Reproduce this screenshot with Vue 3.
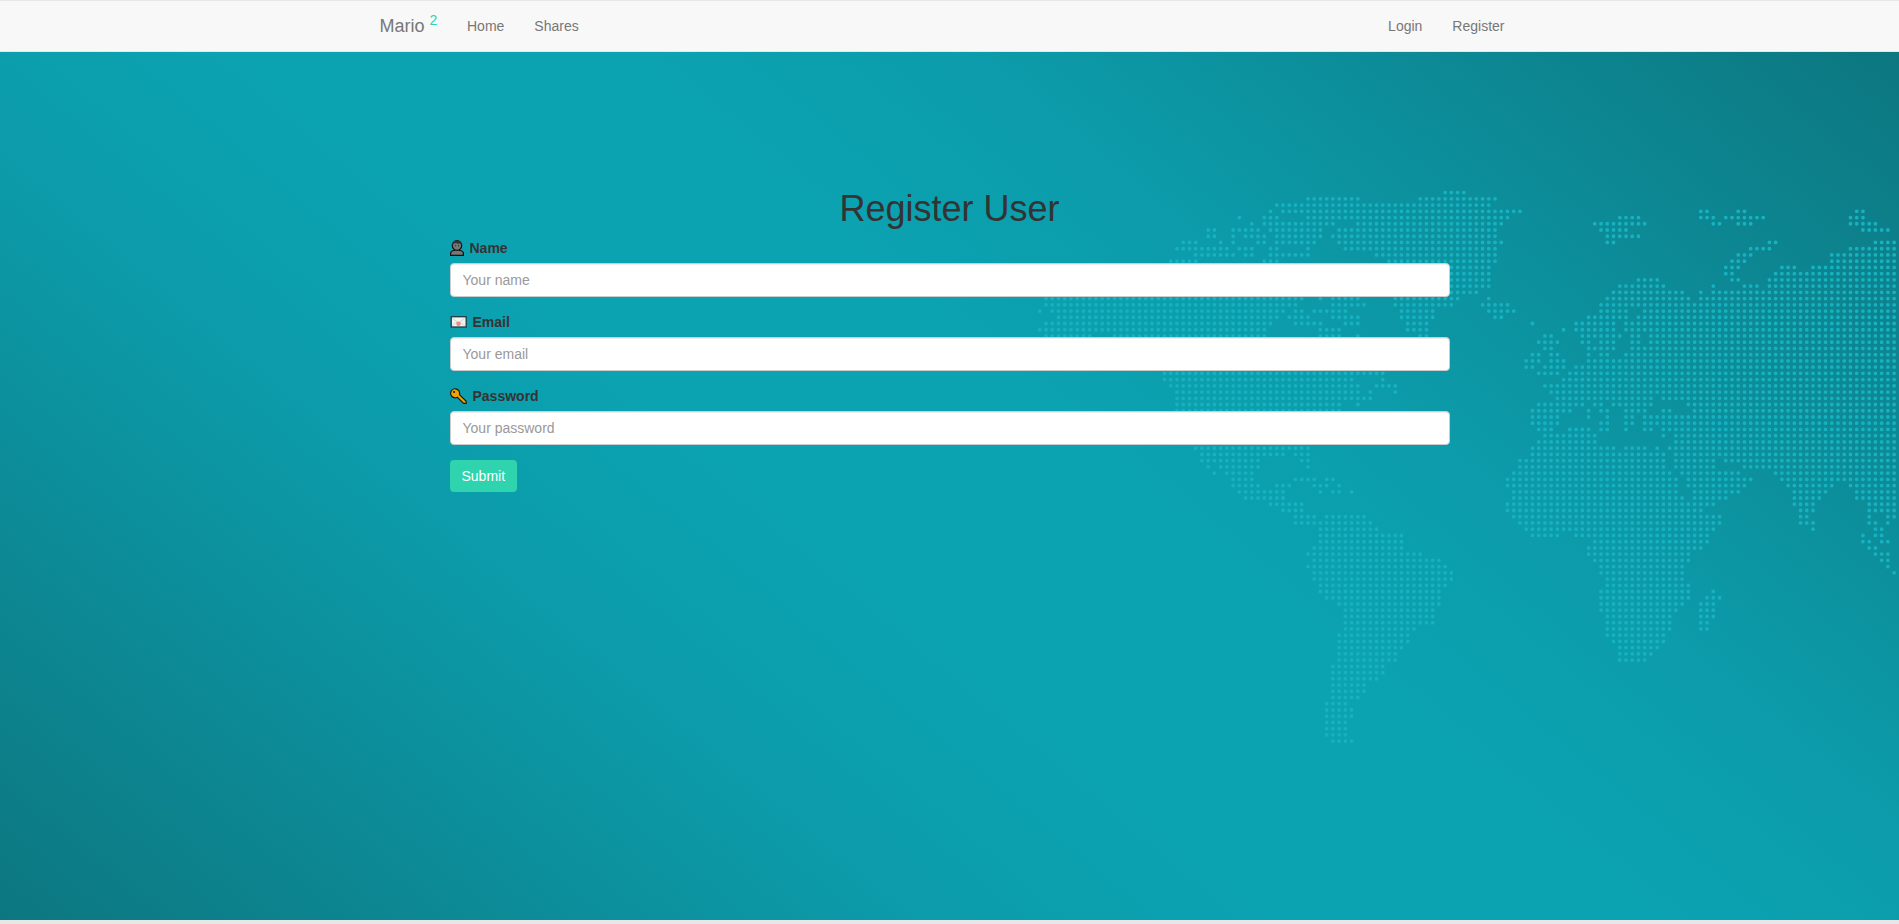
<script setup>
import { reactive } from 'vue'

const form = reactive({ name: '', email: '', password: '' })

const pitch = 6.236
const originX = 1039.8
const originY = 140.6

// One line per latitude; each range lists the first and last dotted column.
const landRows = `65-68
43-51 61-73
38-72
37 39-77 106-107 112-113 131-132
32 36-38 43-75 93-96 106-108 110-116 130-132
34 36-47 51-74 89-97 108-109 112-114 130-134
27-28 31-35 37-45 48-73 90-94 132-136
27-28 31 33-36 38-45 47-73 91-96
23-25 29 31 35-36 38-44 48-74 91-92 117-118 134-137
22-30 32-34 37-38 43 49-73 114-117 130-137
25-31 33-34 37-43 54-73 112-114 127-137
21-25 36-38 56-73 111-113 127-137
60-72 110-112 119-121 124-137
60-72 110-111 118-137
60-72 96-99 111-112 117-137
60-72 93-100 108 113-115 117-137
60-70 92-103 106 108-137
1-42 45 47-51 57-67 72 91-104 106-137
1-41 47-52 57-66 71-75 90-137
0 2-39 41-42 44-49 58-63 72-76 90-94 97-137
3-38 40-43 47-51 58-63 73-74 88-94 96-137
1-37 41-45 49-51 59-62 79 86-92 94-137
0-36 45-48 59-62 84 86-92 94-137
1-8 12-36 45-48 51 61-62 81-82 87-93 95-96 98-137
80-83 87-88 90-92 95-96 98-137
81-82 88-92 95-137
79-80 82-83 88 90-91 94-137
78-80 82-84 88-137
78-79 81-84 86-137
20-55 80-83 85-137
20-50 55 84-137
21-51 54-57 81-137
22-51 53 57 82-137
22-53 83-98 100-137
22-48 51 80-87 89-90 92-98 104-137
22-48 79-85 88 90-91 94-97 100-101 105-137
79-83 88 91 94-95 97-137
79-83 90-91 94-95 97-137
80-82 85-88 90-91 94 97-98 100-137
81-89 100 102-137
80-89 102-137
25-43 79-92 94-97 99 101-137
26-39 41-43 79-100 102-137
26-35 42-43 77-100 102-108 110-137
27 29-35 43 77-100 102-108 113-137
28 30-34 76-101 103-112 118-137
31-34 41-44 46-47 75-102 104-114 119-137
31-35 38-40 44-46 48 75-102 104-113 120-127 130-137
32-39 45 47-48 50 76-102 105-112 121-126 131-137
33-39 76-103 105-110 121-125 131-137
37-42 75-108 121-124 133-137
39-42 75-106 122-124 133-137
41-44 46-52 76-109 122-123 133 136-137
41-53 77-109 122-124 133-134 136
45-54 78-108 124 134-135
45-58 79-83 86-107 132 134-135
45-58 89-107 132-133 135-136
44-58 88-106 133-134
43-61 88-104 134-136
44-64 89-104 135-136
43-65 90-103 136
44-66 90-103 137
44-66 91-103
45-65 91-104
45-64 90-104 108
46-64 90-104 107-109
48-64 90-103 106-108
49-63 90-102 106-108
49-63 91-101 106-108
49-63 91-101 106-107
49-60 91-101 106-107
48-59 91-100
48-59 92-100
48-58 93-99
48-57 93-98
48-57 93-97
47-55
47-55
47-54
47-52
47-52
47-51
46-49
46-50
46-50
46-49
46-49
46-49
47-50`.split('\n')

const dotsPath = landRows
  .map((row, r) =>
    row
      .split(' ')
      .map((range) => {
        const [from, to = from] = range.split('-').map(Number)
        let d = ''
        for (let c = from; c <= to; c++) {
          d += `M${(originX + c * pitch).toFixed(2)} ${(originY + r * 6.233).toFixed(2)}h0`
        }
        return d
      })
      .join('')
  )
  .join('')
</script>

<template>
  <div class="page">
    <nav class="navbar">
      <div class="container">
        <a class="brand">Mario <sup>2</sup></a>
        <a class="link">Home</a>
        <a class="link">Shares</a>
        <span class="spacer"></span>
        <a class="link">Login</a>
        <a class="link">Register</a>
      </div>
    </nav>

    <main class="hero">
      <svg class="map" width="1899" height="868" viewBox="0 0 1899 868" aria-hidden="true">
        <path :d="dotsPath" />
      </svg>
      <form class="form" @submit.prevent>
        <h1>Register User</h1>
        <div class="group">
          <label for="name">
            <svg class="icon" width="14" height="16" viewBox="0 0 14 16">
              <path d="M.6 15.4v-2.1c0-1.5 1.2-2.5 3-2.8h6.8c1.8.3 3 1.3 3 2.8v2.1z" fill="#777" stroke="#111" stroke-width="1.2" />
              <path d="M5 8.7h4v2.2H5z" fill="#777" />
              <ellipse cx="7" cy="5.5" rx="4.7" ry="4.8" fill="#777" stroke="#111" stroke-width="1.2" />
              <path d="M2.2 5.3C1.9 2.4 4 .6 7 .6s5.1 1.8 4.8 4.7L9.8 3.5C7.7 3.9 5 3.2 4.2 3.4z" fill="#333" />
              <path d="M5.2 5.2h.9v1h-.9zM8 5.2h.9v1H8z" fill="#111" />
            </svg>
            Name
          </label>
          <input id="name" v-model="form.name" type="text" placeholder="Your name" />
        </div>
        <div class="group">
          <label for="email">
            <svg class="icon" width="17" height="16" viewBox="0 0 17 16">
              <rect x="1.2" y="2.7" width="15" height="10.3" fill="#f2f2f2" stroke="#1d3b42" stroke-width="1.3" />
              <path d="M2 4l6.5 5L15 4M2 12l5-4m8 4l-5-4" fill="none" stroke="#c9cfcf" stroke-width=".8" />
              <circle cx="8.5" cy="9.7" r="2.2" fill="#f08a7b" />
            </svg>
            Email
          </label>
          <input id="email" v-model="form.email" type="text" placeholder="Your email" />
        </div>
        <div class="group">
          <label for="password">
            <svg class="icon" width="17" height="16" viewBox="0 0 17 16">
              <path d="M9.4 6.6l6.8 6.6v2.2h-2.6L7.3 9.2A4.5 4.5 0 1 1 9.4 6.6z" fill="#f5a000" stroke="#151d18" stroke-width="1.2" stroke-linejoin="round" />
              <circle cx="4" cy="4" r="1.1" fill="#151d18" />
            </svg>
            Password
          </label>
          <input id="password" v-model="form.password" type="password" placeholder="Your password" />
        </div>
        <button type="submit">Submit</button>
      </form>
    </main>
  </div>
</template>

<style>
body {
  margin: 0;
  background: #e7e7e7;
}
</style>

<style scoped>
.page {
  height: 924px;
  overflow: hidden;
  font: 14px/20px "Liberation Sans", Arial, sans-serif;
  color: #333;
}
.page *,
.page {
  box-sizing: border-box;
}
.navbar {
  height: 52px;
  background: #f8f8f8;
  border: solid #e7e7e7;
  border-width: 1px 0;
}
.container {
  display: flex;
  width: 1140px;
  margin: 0 auto;
}
.brand,
.link {
  padding: 15px;
  color: #777;
}
.brand {
  width: 72.5px;
  padding-left: 0;
  padding-right: 0;
  margin-right: 15px;
  white-space: nowrap;
  font-size: 18px;
}
.brand:first-child {
  width: 57.5px;
}
.brand sup {
  position: relative;
  top: -0.5em;
  font-size: 14px;
  line-height: 0;
  vertical-align: baseline;
  color: #2fd3ad;
}
.spacer {
  flex: 1;
}
.hero {
  position: relative;
  height: 868px;
  padding-top: 137.4px;
  background: linear-gradient(40deg, #0c7780 0%, #0c9cab 32%, #0ba2b1 43%, #0ba2b1 57%, #0c9cab 68%, #0c7780 100%);
}
.map {
  position: absolute;
  inset: 0;
}
.map path {
  fill: none;
  stroke: #17b1c0;
  stroke-width: 3.8;
  stroke-linecap: round;
}
.form {
  position: relative;
  width: 1000px;
  margin: 0 auto;
}
h1 {
  margin: 0 0 9px;
  font-size: 36px;
  font-weight: normal;
  line-height: 39.6px;
  text-align: center;
}
.group {
  margin-bottom: 15px;
}
label {
  display: flex;
  align-items: center;
  height: 20px;
  margin-bottom: 5px;
  font-weight: bold;
}
.icon {
  flex: none;
  margin-right: 6px;
}
input {
  display: block;
  width: 100%;
  height: 34px;
  padding: 6px 12px;
  font: inherit;
  color: #555;
  background: #fff;
  border: 1px solid #ccc;
  border-radius: 4px;
  box-shadow: inset 0 1px 1px rgba(0, 0, 0, 0.075);
}
input::placeholder {
  color: #999;
}
button {
  display: block;
  padding: 6px 12px;
  font: inherit;
  color: #fff;
  background: #2fd3ad;
  border: 0;
  border-radius: 4px;
}
</style>
